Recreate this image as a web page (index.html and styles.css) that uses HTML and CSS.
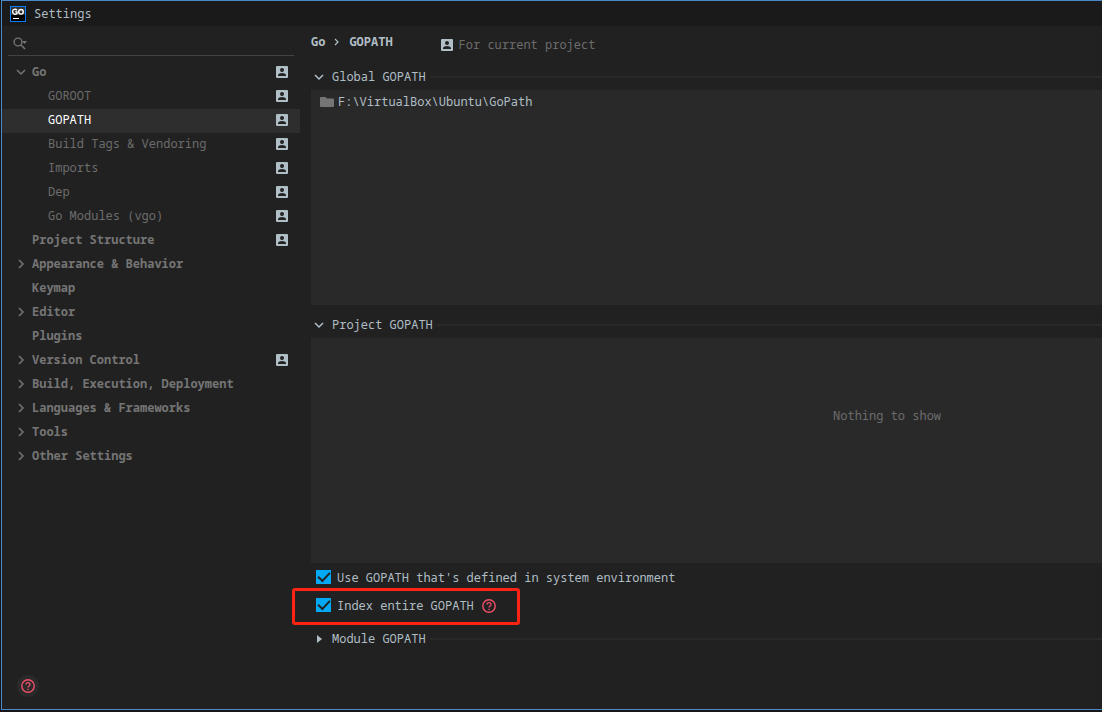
FILE: index.html
```html
<!DOCTYPE html>
<html lang="en">
<head>
<meta charset="utf-8">
<title>Settings</title>
<link rel="stylesheet" href="styles.css">
</head>
<body>
<svg class="defs" aria-hidden="true">
  <symbol id="person" viewBox="0 0 12 12"><rect width="12" height="12" rx="1" fill="#b0bec5"/><circle cx="6" cy="4" r="2" fill="#212121"/><path d="M2 10V9c0-1.3 2.5-2 4-2s4 .7 4 2v1z" fill="#212121"/></symbol>
  <symbol id="right" viewBox="0 0 10 10"><path d="M3 1l4 4-4 4" fill="none" stroke="currentColor" stroke-width="1.5"/></symbol>
  <symbol id="down" viewBox="0 0 10 10"><path d="M1 3l4 4 4-4" fill="none" stroke="currentColor" stroke-width="1.5"/></symbol>
  <symbol id="help" viewBox="0 0 14 14"><circle cx="7" cy="7" r="6.2" fill="none" stroke="#ef5068" stroke-width="1.4"/><path d="M5 5.6C5 2.9 9 3 9 5.5 9 7 7 7 7 8.6M7 9.8v1.3" fill="none" stroke="#ef5068" stroke-width="1.3"/></symbol>
</svg>
<div class="dialog">
  <header class="titlebar">
    <svg class="logo" viewBox="0 0 16 16"><rect width="16" height="16" fill="#087cfa"/><rect x="1" y="1" width="14" height="14" fill="#000"/><rect x="1" y="1" width="14" height="8" fill="#333"/><path d="M7 4.2C5.5 2.6 2.6 3.300 2.600 5.700S5.500 9 7 7.600V5.900H5.200" fill="none" stroke="#fff" stroke-width="1.400"/><circle cx="11" cy="5.800" r="2.300" fill="none" stroke="#fff" stroke-width="1.400"/><rect x="3" y="12" width="6" height="1" fill="#fff"/></svg>
    <h1>Settings</h1>
  </header>
  <div class="body">
    <aside class="sidebar">
      <label class="search">
        <svg viewBox="0 0 15 13"><circle cx="5" cy="5" r="3.900" fill="none" stroke="#757575" stroke-width="1.400"/><path d="M8 8l4 4" stroke="#757575" stroke-width="1.600"/><path d="M9 4h5l-2.500 3z" fill="#757575"/></svg>
        <input type="search" aria-label="Search settings">
      </label>
      <nav class="tree">
        <button class="node"><svg class="arrow"><use href="#down"/></svg><span>Go</span><svg class="person"><use href="#person"/></svg></button>
        <button class="node child"><span>GOROOT</span><svg class="person"><use href="#person"/></svg></button>
        <button class="node child selected" aria-current="page"><span>GOPATH</span><svg class="person"><use href="#person"/></svg></button>
        <button class="node child"><span>Build Tags &amp; Vendoring</span><svg class="person"><use href="#person"/></svg></button>
        <button class="node child"><span>Imports</span><svg class="person"><use href="#person"/></svg></button>
        <button class="node child"><span>Dep</span><svg class="person"><use href="#person"/></svg></button>
        <button class="node child"><span>Go Modules (vgo)</span><svg class="person"><use href="#person"/></svg></button>
        <button class="node leaf"><span>Project Structure</span><svg class="person"><use href="#person"/></svg></button>
        <button class="node"><svg class="arrow"><use href="#right"/></svg><span>Appearance &amp; Behavior</span></button>
        <button class="node leaf"><span>Keymap</span></button>
        <button class="node"><svg class="arrow"><use href="#right"/></svg><span>Editor</span></button>
        <button class="node leaf"><span>Plugins</span></button>
        <button class="node"><svg class="arrow"><use href="#right"/></svg><span>Version Control</span><svg class="person"><use href="#person"/></svg></button>
        <button class="node"><svg class="arrow"><use href="#right"/></svg><span>Build, Execution, Deployment</span></button>
        <button class="node"><svg class="arrow"><use href="#right"/></svg><span>Languages &amp; Frameworks</span></button>
        <button class="node"><svg class="arrow"><use href="#right"/></svg><span>Tools</span></button>
        <button class="node"><svg class="arrow"><use href="#right"/></svg><span>Other Settings</span></button>
      </nav>
      <button class="help-button" aria-label="Help"><svg class="help"><use href="#help"/></svg></button>
    </aside>
    <main class="content">
      <div class="heading">
        <h2 class="crumbs"><span>Go</span><svg viewBox="0 0 6 8"><path d="M1 1l3 3-3 3" fill="none" stroke="#b0bec5" stroke-width="1.200"/></svg><span>GOPATH</span></h2>
        <p class="scope"><svg class="person"><use href="#person"/></svg>For current project</p>
      </div>
      <button class="section"><svg class="arrow"><use href="#down"/></svg><span>Global GOPATH</span></button>
      <div class="panel global">
        <div class="path"><svg viewBox="0 0 14 12"><path d="M1 1h4.500l1.500 1.500h6a1 1 0 0 1 1 1V10a1 1 0 0 1-1 1H1a1 1 0 0 1-1-1V2a1 1 0 0 1 1-1z" fill="#757575"/></svg><span>F:\VirtualBox\Ubuntu\GoPath</span></div>
      </div>
      <button class="section"><svg class="arrow"><use href="#down"/></svg><span>Project GOPATH</span></button>
      <div class="panel project"><p class="empty">Nothing to show</p></div>
      <div class="options">
        <label class="option"><input type="checkbox" checked><span>Use GOPATH that's defined in system environment</span></label>
        <div class="indexed">
          <label class="option"><input type="checkbox" checked><span>Index entire GOPATH</span></label>
          <svg class="help"><use href="#help"/></svg>
        </div>
      </div>
      <button class="section module"><svg class="arrow" viewBox="0 0 10 10"><path d="M3 1l5 4-5 4z" fill="currentColor"/></svg><span>Module GOPATH</span></button>
    </main>
  </div>
</div>
</body>
</html>
```
FILE: styles.css
```css
* { box-sizing: border-box; }

body {
  margin: 0;
  height: 100vh;
  padding: 0 0 2px 1px;
  overflow: hidden;
  display: flex;
  background: #15171a;
  color: #b0bec5;
  font: 12px/16px "Droid Sans Mono", "Noto Sans Mono", "DejaVu Sans Mono", monospace;
}

h1, h2, p { margin: 0; font-size: 12px; }
button { padding: 0; border: 0; background: none; color: inherit; font: inherit; text-align: left; }
svg { display: block; flex: none; }
.defs { position: absolute; width: 0; height: 0; }

.dialog {
  flex: 1;
  min-width: 0;
  display: flex;
  flex-direction: column;
  border: 1px solid #4a88c7;
  border-right: 0;
  background: #212121;
}

.titlebar {
  height: 25px;
  padding-left: 8px;
  display: flex;
  align-items: center;
  gap: 8px;
  background: #1a1a1a;
}
.titlebar h1 { font-weight: 400; }
.logo { width: 16px; height: 16px; }

.body { flex: 1; display: flex; min-height: 0; }

.sidebar { width: 298px; flex: none; display: flex; flex-direction: column; }
.search {
  height: 30px;
  margin: 0 6px 5px;
  padding: 6px 5px 0;
  display: flex;
  align-items: center;
  gap: 4px;
  border-bottom: 1px solid #424242;
}
.search svg { width: 15px; height: 13px; }
.search input { flex: 1; min-width: 0; border: 0; outline: 0; background: none; color: inherit; font: inherit; }

.node {
  width: 100%;
  height: 24px;
  padding: 0 12px 2px 14px;
  display: flex;
  align-items: center;
  gap: 6px;
  color: #757575;
  font-weight: 700;
}
.node.leaf { padding-left: 30px; }
.node.child { padding-left: 46px; color: #6c6c6c; font-weight: 400; }
.node.child.selected { background: #2e2e2e; color: #fff; }
.node .person { margin-left: auto; }
.person { width: 12px; height: 12px; }
.arrow { width: 10px; height: 10px; }

.help { width: 14px; height: 14px; }
.help-button {
  width: 22px;
  height: 22px;
  margin: auto 0 12px 15px;
  display: grid;
  place-items: center;
  border-radius: 50%;
  background: #2a2a2a;
}

.content { flex: 1; min-width: 0; padding-left: 11px; display: flex; flex-direction: column; }
.heading { padding: 8px 0 16px; display: flex; gap: 48px; }
.crumbs { display: flex; align-items: center; gap: 9px; height: 16px; }
.crumbs svg { width: 6px; height: 8px; }
.scope { display: flex; align-items: center; gap: 6px; padding-top: 3px; color: #6c6c6c; }

.section { padding: 0 0 0 3px; display: flex; align-items: center; height: 16px; }
.section span { margin: 0 4px 0 8px; }
.section::after { content: ""; flex: 1; height: 2px; background: #292929; }
.panel { background: #292929; }
.global { min-height: 215px; margin: 5px 0 12px; padding: 4px 9px; }
.path { display: flex; align-items: center; gap: 4px; }
.path svg { width: 14px; height: 12px; }
.project { min-height: 225px; margin-top: 5px; padding-top: 70px; }
.empty { margin-left: 66%; color: #6c6c6c; }

.options { display: flex; flex-direction: column; align-items: flex-start; padding: 7px 5px 0; }
.option { display: flex; align-items: center; gap: 6px; }
.option input {
  appearance: none;
  width: 15px;
  height: 14px;
  margin: 0 0 2px;
  display: grid;
  place-items: center;
  background: #03a9f4;
}
.option input:checked::before {
  content: "";
  width: 10px;
  height: 5px;
  margin-bottom: 4px;
  border: solid #212121;
  border-width: 0 0 2px 2px;
  transform: rotate(-47deg);
}
.indexed {
  display: flex;
  align-items: center;
  gap: 8px;
  margin: 2px 0 0 -24px;
  padding: 7px 21px 8px 21px;
  border: 3px solid #ff2315;
  border-radius: 3px;
}
.module { margin-top: 6px; }
```
